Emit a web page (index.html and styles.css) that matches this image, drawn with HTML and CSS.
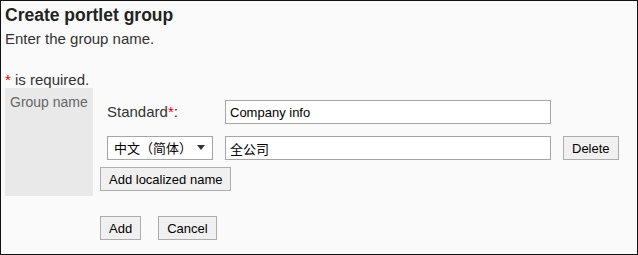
FILE: index.html
```html
<!DOCTYPE html>
<html lang="en">

<head>
    <meta charset="UTF-8">
    <meta name="viewport" content="width=device-width, initial-scale=1.0">
    <title>Create portlet group</title>
    <link rel="stylesheet" href="styles.css">
</head>

<body>
    <div class="page">
        <h1>Create portlet group</h1>
        <p class="lead">Enter the group name.</p>
        <p class="required-note"><span class="req">*</span> is required.</p>

        <form id="groupForm">
            <div class="form-row">
                <div class="row-label">Group name</div>
                <div class="row-field">
                    <div class="name-line">
                        <label class="name-lang" for="nameStandard">Standard<span class="req">*</span>:</label>
                        <input type="text" id="nameStandard" class="text-input" value="Company info">
                    </div>
                    <div class="name-line">
                        <span class="select-wrap">
                            <select class="lang-select">
                                <option>中文（简体）</option>
                                <option>日本語</option>
                                <option>English</option>
                            </select>
                        </span>
                        <input type="text" class="text-input" value="全公司">
                        <button type="button" class="btn">Delete</button>
                    </div>
                    <button type="button" class="btn add-localized">Add localized name</button>
                </div>
            </div>

            <div class="actions">
                <button type="submit" class="btn">Add</button>
                <button type="button" class="btn">Cancel</button>
            </div>
        </form>
    </div>
</body>

</html>
```

FILE: styles.css
```css
body {
    margin: 0;
    font-family: 'Liberation Sans', Arial, 'Noto Sans CJK SC', sans-serif;
    color: #333;
}

.page {
    box-sizing: border-box;
    width: 638px;
    height: 255px;
    padding: 3px 4px 0;
    border: 1px solid #111;
    background-color: #fafafa;
}

h1 {
    margin: 0;
    font-size: 17.5px;
    line-height: 22px;
    color: #222;
}

.lead {
    margin: 4px 0 0;
    font-size: 15px;
    line-height: 18px;
}

.required-note {
    margin: 23px 0 0;
    font-size: 15px;
    line-height: 17px;
}

.req {
    color: #e60000;
}

.form-row {
    display: flex;
    gap: 7px;
}

.row-label {
    width: 88px;
    box-sizing: border-box;
    padding: 6px 5px 0;
    background-color: #e9e9e9;
    color: #666;
    font-size: 14px;
    line-height: 16px;
}

.row-field {
    padding: 12px 0 5px;
}

.name-line {
    display: flex;
    align-items: center;
    gap: 12px;
    padding-left: 7px;
    margin-bottom: 12px;
}

.name-line:nth-child(2) {
    margin-bottom: 7px;
}

.name-lang {
    width: 106px;
    font-size: 15px;
    line-height: 18px;
}

.text-input {
    box-sizing: border-box;
    width: 326px;
    height: 24px;
    margin: 0;
    padding: 0 4px;
    border: 1px solid #a6a6a6;
    border-radius: 0;
    background: #fff;
    font-family: inherit;
    font-size: 13px;
    color: #000;
}

.select-wrap {
    position: relative;
    display: block;
}

.select-wrap::after {
    content: "";
    position: absolute;
    right: 8px;
    top: 9px;
    border-left: 4px solid transparent;
    border-right: 4px solid transparent;
    border-top: 5px solid #333;
    pointer-events: none;
}

.lang-select {
    display: block;
    box-sizing: border-box;
    width: 106px;
    height: 24px;
    margin: 0;
    padding: 0 0 0 6px;
    border: 1px solid #a6a6a6;
    border-radius: 0;
    background: #fff;
    appearance: none;
    font-family: inherit;
    font-size: 13px;
    color: #000;
}

.btn {
    box-sizing: border-box;
    height: 24px;
    margin: 0;
    padding: 0 8px;
    border: 1px solid #adadad;
    border-radius: 0;
    background-color: #f0f0f0;
    font-family: inherit;
    font-size: 13px;
    color: #000;
    cursor: pointer;
}

.btn:hover {
    background-color: #e5f1fb;
}

.add-localized {
    display: block;
}

.actions {
    display: flex;
    gap: 17px;
    margin: 20px 0 0 95px;
}
```
